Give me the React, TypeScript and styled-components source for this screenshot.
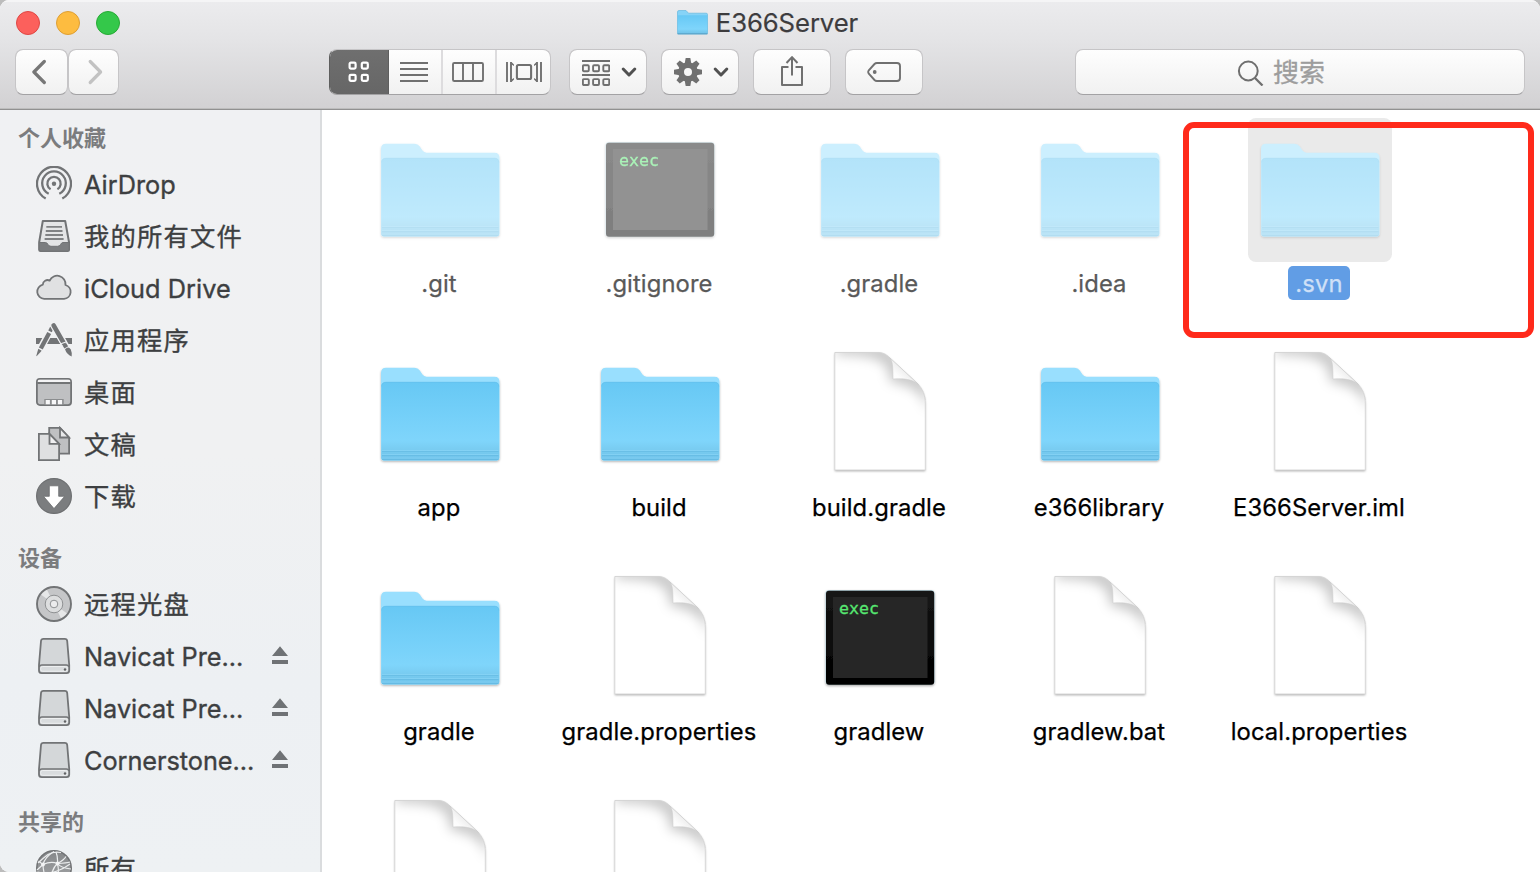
import React from "react";
import styled, { createGlobalStyle } from "styled-components";

const GlobalStyle = createGlobalStyle`
  html, body { margin: 0; padding: 0; background: #bcbcbc; overflow: hidden; }
  *, *::before, *::after { box-sizing: border-box; }
  svg { display: block; flex: none; }
`;

const Window = styled.div`
  position: relative;
  width: 1540px;
  height: 872px;
  display: flex;
  flex-direction: column;
  overflow: hidden;
  border-radius: 9px 9px 0 9px;
  background: #fff;
  font-family: Inter, "Noto Sans CJK SC", sans-serif;
`;

/* ---------- toolbar ---------- */

const Toolbar = styled.header`
  flex: none;
  height: 110px;
  background: linear-gradient(#ececee 0, #e4e4e6 40px, #d2d1d3 108px);
  border-bottom: 1px solid #919191;
  box-shadow: inset 0 2px 0 #f5f5f6, inset 0 -1px 0 #bdbdbd;
`;

const TitleBar = styled.div`
  height: 49px;
  padding: 0 21px 4px 16px;
  display: grid;
  grid-template-columns: 1fr auto 1fr;
  align-items: center;
`;

const Lights = styled.div`
  display: flex;
  gap: 16px;
`;

const Light = styled.span<{ $fill: string; $edge: string }>`
  width: 24px;
  height: 24px;
  border-radius: 50%;
  background: ${(p) => p.$fill};
  border: 1px solid ${(p) => p.$edge};
`;

const Title = styled.h1`
  margin: 0;
  display: flex;
  align-items: center;
  gap: 8px;
  font-size: 25.700px;
  line-height: 32px;
  font-weight: 400;
  letter-spacing: -0.1px;
  color: #3d3c3e;
  -webkit-text-stroke: 0.2px #3d3c3e;
`;

const Tools = styled.div`
  display: flex;
  height: 46px;
  padding: 0 15px;
`;

const Button = styled.button<{ $w: number; $ml?: number; $pl?: number; $pr?: number }>`
  flex: none;
  width: ${(p) => p.$w}px;
  height: 46px;
  margin: 0 0 0 ${(p) => p.$ml ?? 0}px;
  padding: 0 ${(p) => p.$pr ?? 0}px 0 ${(p) => p.$pl ?? 0}px;
  display: flex;
  align-items: center;
  justify-content: center;
  gap: 11px;
  border: 1px solid #c6c5c7;
  border-bottom-color: #a3a2a4;
  border-radius: 8px;
  background: linear-gradient(#fefefe, #f1f1f1);
  background-clip: padding-box;
`;

const Segments = styled.div`
  flex: none;
  display: flex;
  width: 222px;
  height: 46px;
  margin-left: 210px;
  overflow: hidden;
  border: 1px solid #c6c5c7;
  border-left-color: #5e5e5e;
  border-bottom-color: #a3a2a4;
  border-radius: 8px;
  background: linear-gradient(#fefefe, #f1f1f1);
`;

const Segment = styled.div<{ $w: number; $active?: boolean; $line?: boolean }>`
  flex: none;
  width: ${(p) => p.$w}px;
  margin: ${(p) => (p.$active ? "-1px 0 -1px -1px" : "0")};
  padding-right: ${(p) => (p.$line ? "2px" : p.$active ? "1px" : "0")};
  display: flex;
  align-items: center;
  justify-content: center;
  background: ${(p) => (p.$active ? "linear-gradient(#6f6f6f, #666)" : "none")};
  box-shadow: ${(p) => (p.$active ? "inset 0 0 0 1px #5f5f5f" : "none")};
  border-right: ${(p) => (p.$line ? "2px solid #dddcde" : "0")};
`;

const Search = styled.div`
  flex: none;
  width: 450px;
  height: 46px;
  margin-left: 152px;
  padding-left: 161px;
  display: flex;
  align-items: center;
  gap: 9px;
  border: 1px solid #c6c5c7;
  border-bottom-color: #a3a2a4;
  border-radius: 8px;
  background: linear-gradient(#fefefe, #f1f1f1);
`;

const SearchHint = styled.span`
  padding-top: 2px;
  font-size: 26px;
  line-height: 42px;
  color: #9d9d9d;
  -webkit-text-stroke: 0.3px #9d9d9d;
`;

/* ---------- body ---------- */

const Body = styled.div`
  flex: 1;
  min-height: 0;
  display: flex;
`;

const Sidebar = styled.nav`
  flex: none;
  width: 322px;
  padding-top: 8px;
  overflow: hidden;
  border-right: 2px solid #dadcde;
  background: linear-gradient(#f0f1f3, #f0f1f2 45%, #edf0f3 75%, #eef1f3);
`;

const Section = styled.section`
  margin-bottom: 16px;
`;

const SectionTitle = styled.h2`
  margin: 0;
  padding-left: 18px;
  height: 40px;
  font-size: 22px;
  line-height: 40px;
  font-weight: 700;
  color: #7b7c7e;
`;

const SideRow = styled.div`
  height: 52px;
  padding-left: 36px;
  display: flex;
  align-items: center;
`;

const SideLabel = styled.span<{ $ls: number }>`
  flex: none;
  width: 200px;
  padding: 2px 0 0 12px;
  font-size: 25.3px;
  line-height: 50px;
  letter-spacing: ${(p) => p.$ls}px;
  white-space: nowrap;
  color: #3d3f41;
  -webkit-text-stroke: 0.35px #3d3f41;
`;

const Files = styled.main`
  flex: 1;
  min-width: 0;
  padding: 8px 0 0 8px;
  overflow: hidden;
  display: grid;
  grid-template-columns: repeat(5, 220px);
  grid-auto-rows: 224px;
  align-content: start;
  background: #fff;
`;

const File = styled.div`
  display: flex;
  flex-direction: column;
  align-items: center;
`;

const IconWell = styled.div<{ $selected?: boolean }>`
  width: 144px;
  height: 144px;
  padding: 8px;
  border-radius: 8px;
  background: ${(p) => (p.$selected ? "#eaeaea" : "transparent")};
`;

const Washed = styled.div<{ $hidden?: boolean }>`
  filter: ${(p) => (p.$hidden ? "url(#wash)" : "none")};
`;

const FileName = styled.span<{ $hidden?: boolean; $selected?: boolean }>`
  height: 34px;
  margin: 4px 2px 0 0;
  padding: 2px 7.500px 0;
  border-radius: 5px;
  font-size: 23.800px;
  line-height: 32px;
  letter-spacing: 0.1px;
  white-space: nowrap;
  color: ${(p) => (p.$selected ? "#cfe0f7" : p.$hidden ? "#595959" : "#000")};
  background: ${(p) => (p.$selected ? "#619de5" : "transparent")};
  -webkit-text-stroke: 0.25px currentColor;
`;

const Highlight = styled.div`
  position: absolute;
  left: 1183px;
  top: 122px;
  width: 351px;
  height: 216px;
  border: 6px solid #ff2a1b;
  border-radius: 11px;
`;

/* ---------- file icons ---------- */

const HiddenSvg = styled.svg`
  position: absolute;
`;

const Defs = () => (
  <HiddenSvg width="0" height="0">
    <defs>
      <linearGradient id="front" x1="0" y1="0" x2="0" y2="1">
        <stop offset="0" stopColor="#67c8f4" />
        <stop offset="0.45" stopColor="#75d0f9" />
        <stop offset="0.75" stopColor="#7fd5fb" />
        <stop offset="0.87" stopColor="#78cbf0" />
        <stop offset="1" stopColor="#6fc3ea" />
      </linearGradient>
      <linearGradient id="bezel" x1="0" y1="0" x2="0" y2="1">
        <stop offset="0" stopColor="#161616" />
        <stop offset="1" stopColor="#000" />
      </linearGradient>
      <linearGradient id="curl" x1="0" y1="1" x2="0.55" y2="0.45">
        <stop offset="0" stopColor="#fff" />
        <stop offset="0.55" stopColor="#fcfcfc" />
        <stop offset="1" stopColor="#ececec" />
      </linearGradient>
      <linearGradient id="globe" x1="0" y1="0" x2="0" y2="1">
        <stop offset="0" stopColor="#858789" />
        <stop offset="1" stopColor="#a5a7a9" />
      </linearGradient>
      <filter id="drop" x="-10%" y="-10%" width="120%" height="125%">
        <feDropShadow dx="0" dy="1.200" stdDeviation="1.100" floodColor="#000" floodOpacity="0.330" />
      </filter>
      <filter id="soft" x="-60%" y="-60%" width="220%" height="220%">
        <feGaussianBlur stdDeviation="6" />
      </filter>
      <filter id="wash" x="0" y="0" width="100%" height="100%" colorInterpolationFilters="sRGB">
        <feComponentTransfer>
          <feFuncR type="linear" slope="0.500" intercept="0.500" />
          <feFuncG type="linear" slope="0.500" intercept="0.500" />
          <feFuncB type="linear" slope="0.500" intercept="0.500" />
        </feComponentTransfer>
      </filter>
      <clipPath id="page">
        <path d="M18.800 2.500H62C68 2.500 71 5 75 9L101 33C107 39 109.300 46 109.300 53V120H18.800Z" />
      </clipPath>
    </defs>
  </HiddenSvg>
);

const FolderIcon = () => (
  <svg width="128" height="128" viewBox="0 0 128 128">
    <g filter="url(#drop)">
      <path
        d="M5 23Q5 17.700 10 17.700H38.500Q42 17.700 43.800 20.400L46.500 24.600Q48 26.700 50.500 26.700H118.500Q123.500 26.700 123.500 32V107.500Q123.500 110.500 120.500 110.500H8Q5 110.500 5 107.500Z"
        fill="#99dffe"
      />
    </g>
    <path d="M5.300 37Q5.300 32 10 32H118.500Q123.200 32 123.200 37V107.500Q123.200 110.500 120.500 110.500H8Q5.300 110.500 5.300 107.500Z" fill="url(#front)" />
    <path d="M5.500 36.500Q5.800 32.200 10 32.200H118.500Q122.700 32.200 123 36.500" fill="none" stroke="#5fbbe8" strokeOpacity="0.500" />
    <path d="M6 100.500H122.500M6 104.500H122.500M6 108H122.500" stroke="#8fd9fa" strokeOpacity="0.500" />
    <path d="M6 101.500H122.500M6 105.500H122.500M6 109.500H122.500" stroke="#5bb1dc" strokeOpacity="0.450" />
  </svg>
);

const ExecIcon = () => (
  <svg width="128" height="128" viewBox="0 0 128 128">
    <g filter="url(#drop)">
      <rect x="9.400" y="16" width="109.300" height="94.500" rx="3.500" fill="#b9d3dc" />
      <rect x="10" y="16.700" width="108.200" height="94" rx="3" fill="url(#bezel)" />
    </g>
    <rect x="17" y="23" width="94.500" height="81" fill="#262626" />
    <text x="23" y="40.300" fontFamily="DejaVu Sans Mono, monospace" fontSize="16.600" fill="#56e771" stroke="#56e771" strokeWidth="0.300">
      exec
    </text>
  </svg>
);

const PageIcon = () => (
  <svg width="128" height="128" viewBox="0 0 128 128">
    <g filter="url(#drop)">
      <path d="M18.800 2.500H62C68 2.500 71 5 75 9L101 33C107 39 109.300 46 109.300 53V120H18.800Z" fill="#fff" />
    </g>
    <g clipPath="url(#page)">
      <path d="M20 -6H68L112 32V62C108 46 100 36 74 32C73 14 68 5 20 5Z" fill="#000" fillOpacity="0.210" filter="url(#soft)" />
    </g>
    <path d="M18.800 2.500H62C68 2.500 71 5 75 9L101 33C107 39 109.300 46 109.300 53V120H18.800Z" fill="none" stroke="#d2d2d2" strokeWidth="0.900" />
    <path d="M73.500 7.500C76.500 11 77 15 77 29C88 28.300 96 29 102.500 34.500Z" fill="url(#curl)" stroke="#c9c9c9" strokeWidth="0.500" />
  </svg>
);

const icons = { folder: FolderIcon, exec: ExecIcon, page: PageIcon };

/* ---------- sidebar icons ---------- */

const G = "#727476";

const AirDropIcon = () => (
  <svg width="36" height="36" viewBox="0 0 36 36" fill="none" stroke={G} strokeWidth="2.300">
    <path d="M9.700 32.600A17 17 0 1 1 26.300 32.600" />
    <path d="M12.700 27.800A11.800 11.800 0 1 1 23.300 27.800" />
    <path d="M14.600 23.300A6.700 6.700 0 1 1 21.400 23.300" />
    <circle cx="18" cy="17.800" r="2.200" fill={G} stroke="none" />
  </svg>
);

const TrayIcon = () => (
  <svg width="36" height="36" viewBox="0 0 36 36">
    <path d="M6.800 3H29.200L33 24V31.500Q33 33 31.500 33H4.700Q3.200 33 3.200 31.500V24Z" fill="#e4e5e6" stroke={G} strokeWidth="2" strokeLinejoin="round" />
    <path d="M3.200 24.500H9.500Q11 24.500 12 26.500Q13 28.300 15 28.300H21.500Q23.500 28.300 24.500 26.500Q25.500 24.500 27 24.500H33V31.500Q33 33 31.500 33H4.700Q3.200 33 3.200 31.500Z" fill="#7c7e80" stroke={G} />
    <path d="M10.300 8.800H26M9.800 13H26.500M9.300 17H27M8.600 21H27.600" stroke="#808284" strokeWidth="1.800" />
  </svg>
);

const CloudIcon = () => (
  <svg width="36" height="36" viewBox="0 0 36 36">
    <path
      d="M8.200 28.900A7.200 7.200 0 0 1 6.800 14.700A4.700 4.700 0 0 1 13.700 10.600A8.300 8.300 0 0 1 29.500 15A7.100 7.100 0 0 1 28 28.900Z"
      fill="#e0e1e2"
      stroke={G}
      strokeWidth="1.800"
      strokeLinejoin="round"
    />
  </svg>
);

const AppsIcon = () => (
  <svg width="36" height="36" viewBox="0 0 36 36">
    <path d="M0 16H36V22H0Z" fill={G} />
    <path d="M16.500 4.500L3.500 28.500M17.800 3.500L32 28" stroke="#f0f1f3" strokeWidth="7" />
    <path d="M15.900 5.800L14 9.400" stroke={G} strokeWidth="4" />
    <path d="M13.200 10.900L4.800 26.400" stroke={G} strokeWidth="4.300" />
    <path d="M2.300 26.800L5.700 28.700L0.600 34.300L0.300 33.800Z" fill={G} />
    <path d="M17.500 3.500L28.200 22" stroke="#f0f1f3" strokeWidth="6.600" />
    <path d="M17.600 3.400L27.600 20.900" stroke={G} strokeWidth="4.600" strokeLinecap="round" />
    <path d="M25 21.800L30.600 19.800" stroke="#f0f1f3" strokeWidth="1.200" />
    <path d="M28.400 22.300L30.300 25.400" stroke={G} strokeWidth="4.300" />
    <path d="M29 27.200Q32.500 23.700 34.800 27.500Q36 30 35.700 34.600Q30.500 32 29 27.200Z" fill={G} />
  </svg>
);

const DesktopIcon = () => (
  <svg width="36" height="36" viewBox="0 0 36 36">
    <rect x="0.900" y="4.900" width="34.200" height="26.200" rx="3" fill="#bfc0c2" stroke={G} strokeWidth="1.800" />
    <path d="M1.800 8V7Q1.800 5.800 3.500 5.800H32.500Q34.200 5.800 34.200 7V8Z" fill="#f4f4f5" />
    <path d="M1.500 9H34.500" stroke={G} strokeWidth="1.800" />
    <path d="M8.300 25H27.700V31H8.300Z" fill="#8b8d8f" />
    <path d="M9.700 26H13.900V30.200H9.700ZM15.800 26H20V30.200H15.800ZM21.900 26H26.100V30.200H21.900Z" fill="#f7f7f8" />
  </svg>
);

const DocsIcon = () => (
  <svg width="36" height="36" viewBox="0 0 36 36" stroke={G} strokeWidth="1.800">
    <path d="M13.200 1.900H24L33.100 11.500V27.600H13.200Z" fill="#bfc0c2" />
    <path d="M24 1.900V11.500H33.100Z" fill="#e8e9ea" />
    <path d="M2.900 7.900H13.500L23.100 17.900V34.100H2.900Z" fill="#dfe0e1" />
    <path d="M13.500 7.900V17.900H23.100Z" fill="#f0f0f1" />
  </svg>
);

const DownloadIcon = () => (
  <svg width="36" height="36" viewBox="0 0 36 36">
    <circle cx="18" cy="18" r="17.400" fill="#7b7d7f" stroke="#6d6f71" strokeWidth="1.200" />
    <path d="M13.300 7.800H22.700V18.300H28.700L18 30.600L7.500 18.300H13.300Z" fill="#fff" stroke="#6c6e70" strokeWidth="0.800" />
  </svg>
);

const DiscIcon = () => (
  <svg width="36" height="36" viewBox="0 0 36 36">
    <circle cx="18" cy="18" r="17" fill="#c5c6c8" />
    <path d="M18 18L4.500 8.200Q7 4.500 10.500 2.800Z" fill="#e6e7e8" />
    <path d="M18 18L31.500 27.800Q29 31.500 25.500 33.200Z" fill="#e6e7e8" />
    <circle cx="18" cy="18" r="17" fill="none" stroke={G} strokeWidth="1.900" />
    <circle cx="18" cy="18" r="8.800" fill="#dddedf" stroke="#8f9193" strokeWidth="1" />
    <circle cx="18" cy="18" r="3.800" fill="#ececed" stroke="#8f9193" strokeWidth="1" />
  </svg>
);

const DriveIcon = () => (
  <svg width="36" height="36" viewBox="0 0 36 36">
    <path
      d="M7.500 0.900H28.700Q31 0.900 31.200 3L33.200 27V32.500Q33.200 35.100 30.500 35.100H5.700Q3 35.100 3 32.500V27L5 3Q5.200 0.900 7.500 0.900Z"
      fill="#d4d7d9"
      stroke={G}
      strokeWidth="1.800"
    />
    <path d="M3.500 29Q3.500 27 6 27H30.200Q32.700 27 32.700 29" fill="none" stroke={G} strokeWidth="1.300" />
    <rect x="4.700" y="28.500" width="26.800" height="4.800" rx="2" fill="#d9dcde" stroke="#edeff0" strokeWidth="1" />
    <circle cx="29" cy="31.500" r="1.200" fill="#606264" />
  </svg>
);

const GlobeIcon = () => (
  <svg width="36" height="36" viewBox="0 0 36 36">
    <circle cx="18" cy="18" r="17.200" fill="url(#globe)" stroke={G} strokeWidth="1.600" />
    <g fill="none" stroke="#eceeef" strokeWidth="1.200">
      <path d="M2 13Q6 9 12 4.500Q18 1 25 2.500" />
      <path d="M7 14.500Q9 7 18 1.500M7 14.500Q15 11 21.500 13.500Q28 10 30 6.500" />
      <path d="M21.500 13.500Q22 7 20 2M21.500 13.500Q25 18 35 19M21.500 13.500Q15 19 14 35" />
      <path d="M7 14.500Q7 24 13 34M7 14.500L1 20M7 14.500L2.500 11M21.500 13.500Q31 13 34 12" />
      <path d="M21.500 13.500Q24 24 20 35M1 22Q18 26 34 14" />
    </g>
    <circle cx="7" cy="14.500" r="1.900" fill="#f2f3f4" />
    <circle cx="21.500" cy="13.500" r="1.900" fill="#f2f3f4" />
  </svg>
);

const EjectIcon = () => (
  <svg width="16" height="20" viewBox="0 0 16 20" fill="#6f7275">
    <path d="M8 0.300L16 10H0ZM0 14H16V18H0Z" />
  </svg>
);

/* ---------- toolbar icons ---------- */

const T = "#707070";

const Chevron = () => (
  <svg width="16" height="12" viewBox="0 0 16 12" fill="none" stroke="#515151" strokeWidth="3" strokeLinecap="round" strokeLinejoin="round">
    <path d="M2.200 3L8 9L13.800 3" />
  </svg>
);

const GroupIcon = () => (
  <svg width="28" height="28" viewBox="0 0 28 28" fill="none" stroke={T} strokeWidth="1.900">
    <path d="M0 3H28M0 17H28" strokeWidth="2" />
    {[0, 10.2, 20.4].map((x) => (
      <React.Fragment key={x}>
        <rect x={x + 0.9} y="7.300" width="5.900" height="5.900" rx="1" />
        <rect x={x + 0.9} y="21.100" width="5.900" height="5.900" rx="1" />
      </React.Fragment>
    ))}
  </svg>
);

const GearIcon = () => (
  <svg width="28" height="28" viewBox="-14 -14 28 28">
    {[0, 45, 90, 135, 180, 225, 270, 315].map((a) => (
      <path key={a} d="M-3.300 -8.500L-2.300 -14H2.300L3.300 -8.500Z" fill={T} transform={`rotate(${a})`} />
    ))}
    <circle r="6.900" fill="none" stroke={T} strokeWidth="5.800" />
  </svg>
);

const SideItem = ({ icon: Icon, text, ls = 0, eject }: { icon: React.FC; text: string; ls?: number; eject?: boolean }) => (
  <SideRow>
    <Icon />
    <SideLabel $ls={ls}>{text}</SideLabel>
    {eject && <EjectIcon />}
  </SideRow>
);

type Entry = { kind: keyof typeof icons; name?: string; hidden?: boolean; selected?: boolean };

const entries: Entry[] = [
  { kind: "folder", name: ".git", hidden: true },
  { kind: "exec", name: ".gitignore", hidden: true },
  { kind: "folder", name: ".gradle", hidden: true },
  { kind: "folder", name: ".idea", hidden: true },
  { kind: "folder", name: ".svn", hidden: true, selected: true },
  { kind: "folder", name: "app" },
  { kind: "folder", name: "build" },
  { kind: "page", name: "build.gradle" },
  { kind: "folder", name: "e366library" },
  { kind: "page", name: "E366Server.iml" },
  { kind: "folder", name: "gradle" },
  { kind: "page", name: "gradle.properties" },
  { kind: "exec", name: "gradlew" },
  { kind: "page", name: "gradlew.bat" },
  { kind: "page", name: "local.properties" },
  { kind: "page" },
  { kind: "page" },
];

export default function App() {
  return (
    <Window>
      <GlobalStyle />
      <Defs />
      <Toolbar>
        <TitleBar>
          <Lights>
            <Light $fill="#fc605c" $edge="#df4744" />
            <Light $fill="#fdbc40" $edge="#de9f34" />
            <Light $fill="#34c84a" $edge="#27aa35" />
          </Lights>
          <Title>
            <svg width="31" height="26" viewBox="0 0 31 26">
              <path d="M0.500 2Q0.500 0.500 2 0.500H9L11.500 3.200H29Q30.500 3.200 30.500 4.500V23Q30.500 24 29.500 24H1.500Q0.500 24 0.500 23Z" fill="#86d3f7" stroke="#66b9e0" strokeWidth="0.700" />
              <path d="M0.800 5.300H30.200V23Q30.200 23.600 29.500 23.600H1.500Q0.800 23.600 0.800 23Z" fill="url(#front)" />
              <path d="M0.500 23.800H30.500" stroke="#549fc4" strokeWidth="1" />
            </svg>
            E366Server
          </Title>
        </TitleBar>
        <Tools>
          <Button $w={53} $pr={2}>
            <svg width="18" height="26" viewBox="0 0 18 26" fill="none" stroke="#777" strokeWidth="3.200" strokeLinecap="round" strokeLinejoin="round">
              <path d="M12.300 2.500L1.900 13L12.300 23.500" />
            </svg>
          </Button>
          <Button $w={51}>
            <svg width="18" height="26" viewBox="0 0 18 26" fill="none" stroke="#c2c2c2" strokeWidth="3.200" strokeLinecap="round" strokeLinejoin="round">
              <path d="M5.200 2.500L15.600 13L5.200 23.500" />
            </svg>
          </Button>
          <Segments>
            <Segment $w={60} $active>
              <svg width="22" height="22" viewBox="0 0 22 22" fill="none" stroke="#fff" strokeWidth="2.200">
                <rect x="1.600" y="1.600" width="6" height="6" rx="1.300" />
                <rect x="13.800" y="1.600" width="6" height="6" rx="1.300" />
                <rect x="1.600" y="13.800" width="6" height="6" rx="1.300" />
                <rect x="13.800" y="13.800" width="6" height="6" rx="1.300" />
              </svg>
            </Segment>
            <Segment $w={54} $line>
              <svg width="28" height="22" viewBox="0 0 28 22" stroke={T} strokeWidth="2">
                <path d="M0 2H28M0 8H28M0 14H28M0 20H28" />
              </svg>
            </Segment>
            <Segment $w={54} $line>
              <svg width="32" height="22" viewBox="0 0 32 22" fill="none" stroke={T} strokeWidth="1.900">
                <rect x="1" y="2" width="30" height="18" rx="1.300" />
                <path d="M11 2V20M21 2V20" />
              </svg>
            </Segment>
            <Segment $w={53}>
              <svg width="36" height="22" viewBox="0 0 36 22" fill="none" stroke={T} strokeWidth="1.900">
                <path d="M1 1V21M35 1V21M5 1V21M31 1V21" />
                <path d="M5.500 1L8 3.500V5L5.500 3.500ZM5.500 21L8 18.500V17L5.500 18.500ZM30.500 1L28 3.500V5L30.500 3.500ZM30.500 21L28 18.500V17L30.500 18.500Z" fill={T} stroke="none" />
                <rect x="10.900" y="4" width="14.200" height="14" rx="1.500" strokeWidth="2.100" />
              </svg>
            </Segment>
          </Segments>
          <Button $w={78} $ml={18} $pl={3}>
            <GroupIcon />
            <Chevron />
          </Button>
          <Button $w={78} $ml={14} $pl={3}>
            <GearIcon />
            <Chevron />
          </Button>
          <Button $w={78} $ml={14}>
            <svg width="24" height="32" viewBox="0 0 24 32" fill="none" stroke={T} strokeWidth="2">
              <path d="M8.500 11H2V29H22V11H15.500M12 19.500V1.500M6.500 7L12 1.100L17.500 7" strokeLinejoin="round" />
            </svg>
          </Button>
          <Button $w={78} $ml={14}>
            <svg width="34" height="22" viewBox="0 0 34 22" fill="none" stroke={T} strokeWidth="1.900">
              <path d="M10 2H30Q33 2 33 5V17Q33 20 30 20H10Q8.500 20 7.500 19L1.800 12.700Q0.600 11 1.800 9.300L7.500 3Q8.500 2 10 2Z" />
              <circle cx="7.700" cy="11" r="1.900" fill={T} stroke="none" />
            </svg>
          </Button>
          <Search>
            <svg width="27" height="28" viewBox="0 0 27 28" fill="none" stroke="#6f6f6f" strokeWidth="2">
              <circle cx="11.300" cy="13" r="9.400" />
              <path d="M18 20L25.500 27.500" strokeWidth="2.300" />
            </svg>
            <SearchHint>搜索</SearchHint>
          </Search>
        </Tools>
      </Toolbar>
      <Body>
        <Sidebar>
          <Section>
            <SectionTitle>个人收藏</SectionTitle>
            <SideItem icon={AirDropIcon} text="AirDrop" />
            <SideItem icon={TrayIcon} text="我的所有文件" ls={1.2} />
            <SideItem icon={CloudIcon} text="iCloud Drive" ls={0.05} />
            <SideItem icon={AppsIcon} text="应用程序" ls={1.2} />
            <SideItem icon={DesktopIcon} text="桌面" ls={1.2} />
            <SideItem icon={DocsIcon} text="文稿" ls={1.2} />
            <SideItem icon={DownloadIcon} text="下载" ls={1.2} />
          </Section>
          <Section>
            <SectionTitle>设备</SectionTitle>
            <SideItem icon={DiscIcon} text="远程光盘" ls={1.2} />
            <SideItem icon={DriveIcon} text="Navicat Pre..." eject />
            <SideItem icon={DriveIcon} text="Navicat Pre..." eject />
            <SideItem icon={DriveIcon} text="Cornerstone..." ls={-0.05} eject />
          </Section>
          <Section>
            <SectionTitle>共享的</SectionTitle>
            <SideItem icon={GlobeIcon} text="所有" ls={1.2} />
          </Section>
        </Sidebar>
        <Files>
          {entries.map((e, i) => {
            const Icon = icons[e.kind];
            return (
              <File key={i}>
                <IconWell $selected={e.selected}>
                  <Washed $hidden={e.hidden}>
                    <Icon />
                  </Washed>
                </IconWell>
                {e.name && (
                  <FileName $hidden={e.hidden} $selected={e.selected}>
                    {e.name}
                  </FileName>
                )}
              </File>
            );
          })}
        </Files>
      </Body>
      <Highlight />
    </Window>
  );
}
